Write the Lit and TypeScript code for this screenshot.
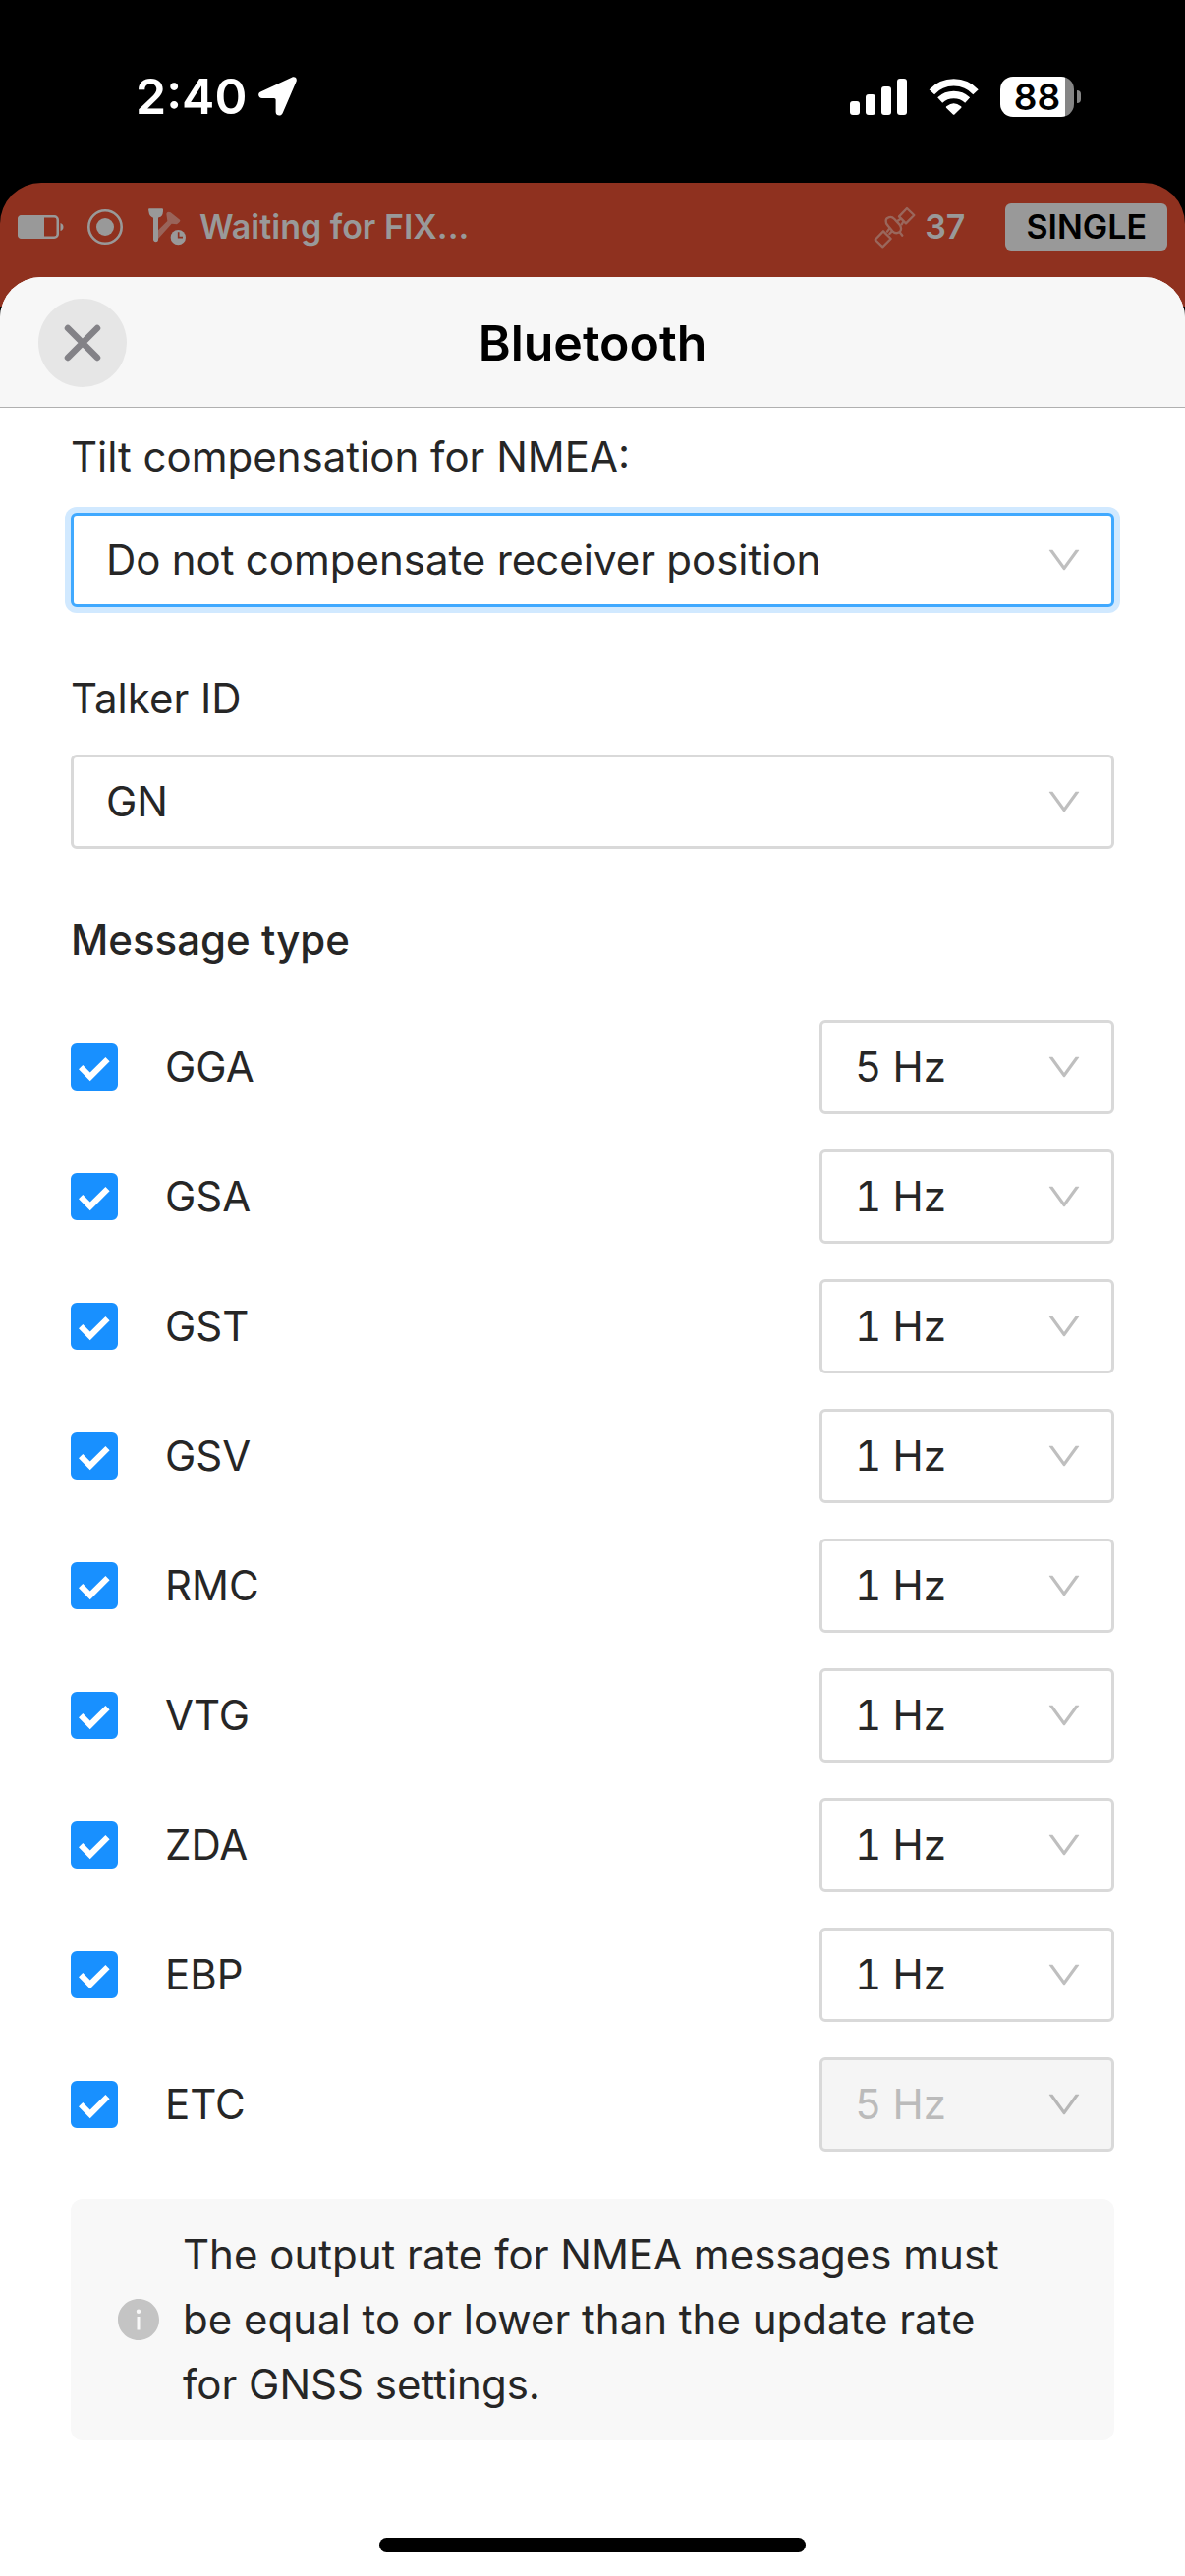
import { LitElement, html, css, svg } from "lit";
import { customElement, property, state } from "lit/decorators.js";

interface MessageRate {
  name: string;
  rate: string;
  locked?: boolean;
}

const RATES = ["1 Hz", "2 Hz", "5 Hz", "10 Hz"];

const chevron = svg`<path d="M884 256h-75c-5.1 0-9.9 2.5-12.9 6.6L512 654.2 227.9 262.6c-3-4.1-7.8-6.6-12.9-6.6h-75c-6.5 0-10.3 7.4-6.5 12.7l352.6 486.1c12.8 17.6 39 17.6 51.7 0l352.6-486.1c3.9-5.3.1-12.7-6.4-12.7z"/>`;

@customElement("select-box")
class SelectBox extends LitElement {
  @property() label = "";
  @property() value = "";
  @property({ type: Array }) options: string[] = [];
  @property({ type: Boolean }) disabled = false;
  @property({ type: Boolean }) active = false;

  static styles = css`
    :host {
      display: block;
    }
    .field {
      display: grid;
      gap: 24px;
    }
    .label {
      line-height: 66px;
    }
    .box {
      display: grid;
      align-items: center;
    }
    .select,
    .arrow {
      grid-area: 1 / 1;
    }
    .select {
      appearance: none;
      width: 100%;
      height: 96px;
      margin: 0;
      padding: 0 84px 2px 33px;
      border: 3px solid #d9d9d9;
      border-radius: 6px;
      background: #fff;
      color: #262626;
      font: inherit;
      font-variant-numeric: tabular-nums;
      outline: none;
      opacity: 1;
    }
    .select.active {
      border-color: #40a9ff;
      box-shadow: 0 0 0 6px #d1e9ff;
    }
    .select:disabled {
      background: #f5f5f5;
      color: #bbb;
    }
    .arrow {
      justify-self: end;
      width: 36px;
      height: 36px;
      margin-right: 33px;
      fill: rgba(0, 0, 0, 0.25);
      pointer-events: none;
    }
  `;

  render() {
    const select = html`<div class="box">
      <select
        id="select"
        class="select ${this.active ? "active" : ""}"
        aria-label=${this.label}
        ?disabled=${this.disabled}
      >
        ${this.options.map(
          (o) => html`<option ?selected=${o === this.value}>${o}</option>`
        )}
      </select>
      <svg class="arrow" viewBox="64 64 896 896" aria-hidden="true">${chevron}</svg>
    </div>`;
    return this.hasAttribute("compact")
      ? select
      : html`<div class="field">
          <label class="label" for="select">${this.label}</label>${select}
        </div>`;
  }
}

@customElement("phone-status")
class PhoneStatus extends LitElement {
  static styles = css`
    :host {
      display: flex;
      align-items: center;
      justify-content: space-between;
      box-sizing: border-box;
      height: 186px;
      padding: 10px 106px 0 138px;
      color: #fff;
      font-weight: 600;
    }
    .group {
      display: flex;
      align-items: center;
    }
    .left {
      gap: 12px;
    }
    .right {
      gap: 22px;
    }
    .time {
      font-size: 50px;
      line-height: 60px;
    }
    .icon {
      display: block;
      fill: currentColor;
    }
    .battery {
      display: flex;
      align-items: center;
      gap: 3px;
    }
    .cell {
      display: grid;
      place-items: center;
      width: 75px;
      height: 41px;
      border-radius: 13px;
      background: linear-gradient(90deg, #fff 88%, #858585 88%);
      color: #000;
      font-size: 37px;
      line-height: 41px;
    }
    .nub {
      width: 4px;
      height: 13px;
      border-radius: 0 4px 4px 0;
      background: #858585;
    }
  `;

  render() {
    return html`
      <div class="group left">
        <span class="time">2:40</span>
        <svg class="icon" width="39" height="40" viewBox="0 0 39 40" aria-hidden="true">
          <path d="M34 .8C37 -.6 39.6 1.6 38.6 4.8L24.6 37.2C23 41 17.6 40 17.6 36V23.6Q17.6 22 16 22H4C0 22-1.4 17.2 2.2 15.4Z" />
        </svg>
      </div>
      <div class="group right">
        <svg class="icon" width="58" height="37" viewBox="0 0 58 37" aria-hidden="true">
          <rect x="0" y="23" width="10" height="14" rx="3" />
          <rect x="16" y="16" width="10" height="21" rx="3" />
          <rect x="32" y="8" width="10" height="29" rx="3" />
          <rect x="48" y="0" width="10" height="37" rx="3" />
        </svg>
        <svg class="icon" width="51" height="37" viewBox="285 57 153 111" aria-hidden="true">
          <g fill="none" stroke="currentColor" stroke-width="22">
            <path d="M295 98A91 91 0 0 1 429 98" />
            <path d="M320 123A62 62 0 0 1 404 123" />
          </g>
          <path d="M339 146Q337 143 341 141Q362 125 383 141Q387 143 385 146L365 166Q362 169 359 166Z" />
        </svg>
        <div class="battery">
          <div class="cell">88</div>
          <div class="nub"></div>
        </div>
      </div>
    `;
  }
}

@customElement("receiver-bar")
class ReceiverBar extends LitElement {
  static styles = css`
    :host {
      display: flex;
      align-items: center;
      box-sizing: border-box;
      height: 126px;
      padding: 0 18px 36px;
      border-radius: 42px 42px 0 0;
      background: #8f311f;
      color: #999;
      font-size: 34px;
      font-weight: 600;
      line-height: 42px;
    }
    .icon {
      display: block;
      flex: none;
    }
    .record {
      margin: 0 24px;
    }
    .state {
      flex: 1;
      padding-left: 12px;
    }
    .count {
      padding: 0 41px 0 8px;
    }
    .mode {
      padding: 3px 21px;
      border-radius: 6px;
      background: #999;
      color: #000;
    }
  `;

  render() {
    return html`
      <svg class="icon" width="47" height="24" viewBox="0 0 47 24" aria-hidden="true">
        <rect x="1.25" y="1.25" width="39.5" height="21.5" rx="3.5" fill="none" stroke="#999" stroke-width="2.5" />
        <path d="M4 0H27V24H4Q0 24 0 20V4Q0 0 4 0Z" fill="#999" />
        <path d="M43.5 8Q46.5 9 46.5 12T43.5 16Z" fill="#999" />
      </svg>
      <svg class="icon record" width="36" height="36" viewBox="0 0 36 36" aria-hidden="true">
        <circle cx="18" cy="18" r="16.7" fill="none" stroke="#999" stroke-width="2.6" />
        <circle cx="18" cy="18" r="9" fill="#999" />
      </svg>
      <svg class="icon" width="42" height="40" viewBox="450 92 126 120" aria-hidden="true">
        <path d="M486 162L514 134L511 112Q512 106 518 106L524 108L552 130Q555 133 551 137L543 144L527 142L486 188Z" fill="#99645a" />
        <path d="M458 96H499Q502 97 501 104Q500 121 488 123L486 124V192Q485 198 479 198T471 192V124Q459 121 457 104Q455 97 458 96Z" fill="#999" />
        <circle cx="547" cy="184" r="23" fill="#999" />
        <path d="M548 168V184H561" fill="none" stroke="#8f311f" stroke-width="5" />
      </svg>
      <span class="state">Waiting for FIX...</span>
      <svg class="icon" width="45" height="45" viewBox="118 445 135 135" fill="none" stroke="#9a675c" stroke-width="7" stroke-linejoin="round" stroke-linecap="round" aria-hidden="true">
        <path d="M126 550L151 524L174 547L149 572Z" />
        <path d="M199 479L223 454L245 475L220 500Z" />
        <path d="M165 507C156 498 157 485 167 482C174 479 181 483 185 487L200 503C207 512 207 522 200 527C192 532 184 529 179 524Z" />
        <path d="M194 493L203 487M207 503L212 495M163 525L169 517M170 532L177 525M202 528L209 537" />
      </svg>
      <span class="count">37</span>
      <span class="mode">SINGLE</span>
    `;
  }
}

@customElement("message-row")
class MessageRow extends LitElement {
  @property({ attribute: false }) message!: MessageRate;

  static styles = css`
    :host {
      display: flex;
      align-items: center;
      justify-content: space-between;
    }
    .name {
      display: flex;
      align-items: center;
      gap: 48px;
      line-height: 66px;
    }
    .tick {
      display: grid;
    }
    .input,
    .mark {
      grid-area: 1 / 1;
      width: 48px;
      height: 48px;
    }
    .input {
      appearance: none;
      margin: 0;
      border: 3px solid #d9d9d9;
      border-radius: 6px;
      background: #fff;
    }
    .input:checked {
      border-color: #1890ff;
      background: #1890ff;
    }
    .mark {
      fill: #fff;
      pointer-events: none;
    }
    .rate {
      width: 300px;
    }
  `;

  render() {
    const { name, rate, locked } = this.message;
    return html`
      <label class="name">
        <span class="tick">
          <input class="input" type="checkbox" checked />
          <svg class="mark" viewBox="0 0 48 48" aria-hidden="true">
            <path d="M8 26.3L12.3 22L19.7 29.6L35.4 14L39.6 18.3L19.7 38.3Z" />
          </svg>
        </span>
        ${name}
      </label>
      <select-box
        compact
        class="rate"
        .label=${`${name} rate`}
        .value=${rate}
        .options=${RATES}
        .disabled=${!!locked}
      ></select-box>
    `;
  }
}

@customElement("app-root")
class AppRoot extends LitElement {
  @state() private messages: MessageRate[] = [
    { name: "GGA", rate: "5 Hz" },
    { name: "GSA", rate: "1 Hz" },
    { name: "GST", rate: "1 Hz" },
    { name: "GSV", rate: "1 Hz" },
    { name: "RMC", rate: "1 Hz" },
    { name: "VTG", rate: "1 Hz" },
    { name: "ZDA", rate: "1 Hz" },
    { name: "EBP", rate: "1 Hz" },
    { name: "ETC", rate: "5 Hz", locked: true },
  ];

  static styles = css`
    :host {
      display: flex;
      flex-direction: column;
      min-height: 100vh;
      background: #000;
      color: #262626;
      font-family: Inter, "Liberation Sans", sans-serif;
      font-size: 42px;
    }
    .sheet {
      display: flex;
      flex: 1;
      flex-direction: column;
      margin-top: -30px;
      border-radius: 42px 42px 0 0;
      background: #fff;
      overflow: hidden;
    }
    .header {
      display: grid;
      grid-template-columns: 1fr auto 1fr;
      align-items: center;
      box-sizing: border-box;
      height: 133px;
      padding: 2px 39px 0;
      border-bottom: 1px solid #b0b0b0;
      background: #f7f7f7;
    }
    .title {
      margin: 0;
      color: #000;
      font-size: 50px;
      font-weight: 600;
      line-height: 60px;
    }
    .close {
      display: grid;
      place-items: center;
      width: 90px;
      height: 90px;
      padding: 0;
      border: 0;
      border-radius: 50%;
      background: #e6e6e6;
    }
    .content {
      display: grid;
      gap: 60px;
      padding: 17px 72px 48px;
    }
    .types {
      display: grid;
      gap: 48px;
    }
    .heading {
      margin: 0;
      font-size: 42px;
      font-weight: 500;
      line-height: 66px;
    }
    .rows {
      display: grid;
      gap: 36px;
    }
    .note {
      display: flex;
      align-items: center;
      gap: 24px;
      padding: 24px 48px;
      border-radius: 12px;
      background: #f8f8f8;
      line-height: 66px;
    }
    .info {
      flex: none;
      width: 42px;
      height: 42px;
      fill: #c4c4c4;
    }
    .text {
      margin: 0;
      padding-right: 48px;
    }
    .home {
      align-self: center;
      width: 36%;
      height: 15px;
      margin: auto 0 24px;
      border-radius: 8px;
      background: #000;
    }
  `;

  render() {
    return html`
      <phone-status></phone-status>
      <receiver-bar></receiver-bar>
      <main class="sheet">
        <header class="header">
          <button class="close" aria-label="Close">
            <svg width="38" height="38" viewBox="0 0 38 38" stroke="#838287" stroke-width="6.5" stroke-linecap="round" aria-hidden="true">
              <path d="M4 4L34 34M34 4L4 34" />
            </svg>
          </button>
          <h1 class="title">Bluetooth</h1>
        </header>
        <div class="content">
          <select-box
            active
            label="Tilt compensation for NMEA:"
            value="Do not compensate receiver position"
            .options=${["Do not compensate receiver position", "Compensate receiver position"]}
          ></select-box>
          <select-box label="Talker ID" value="GN" .options=${["GN", "GP"]}></select-box>
          <section class="types">
            <h2 class="heading">Message type</h2>
            <div class="rows">
              ${this.messages.map((m) => html`<message-row .message=${m}></message-row>`)}
            </div>
            <div class="note">
              <svg class="info" viewBox="64 64 896 896" aria-hidden="true">
                <path d="M512 64C264.6 64 64 264.6 64 512s200.6 448 448 448 448-200.6 448-448S759.4 64 512 64zm32 664c0 4.4-3.6 8-8 8h-48c-4.4 0-8-3.6-8-8V456c0-4.4 3.6-8 8-8h48c4.4 0 8 3.6 8 8v272zm-32-344a48.01 48.01 0 010-96 48.01 48.01 0 010 96z" />
              </svg>
              <p class="text">
                The output rate for NMEA messages must be equal to or lower than the update rate
                for GNSS settings.
              </p>
            </div>
          </section>
        </div>
        <div class="home"></div>
      </main>
    `;
  }
}
